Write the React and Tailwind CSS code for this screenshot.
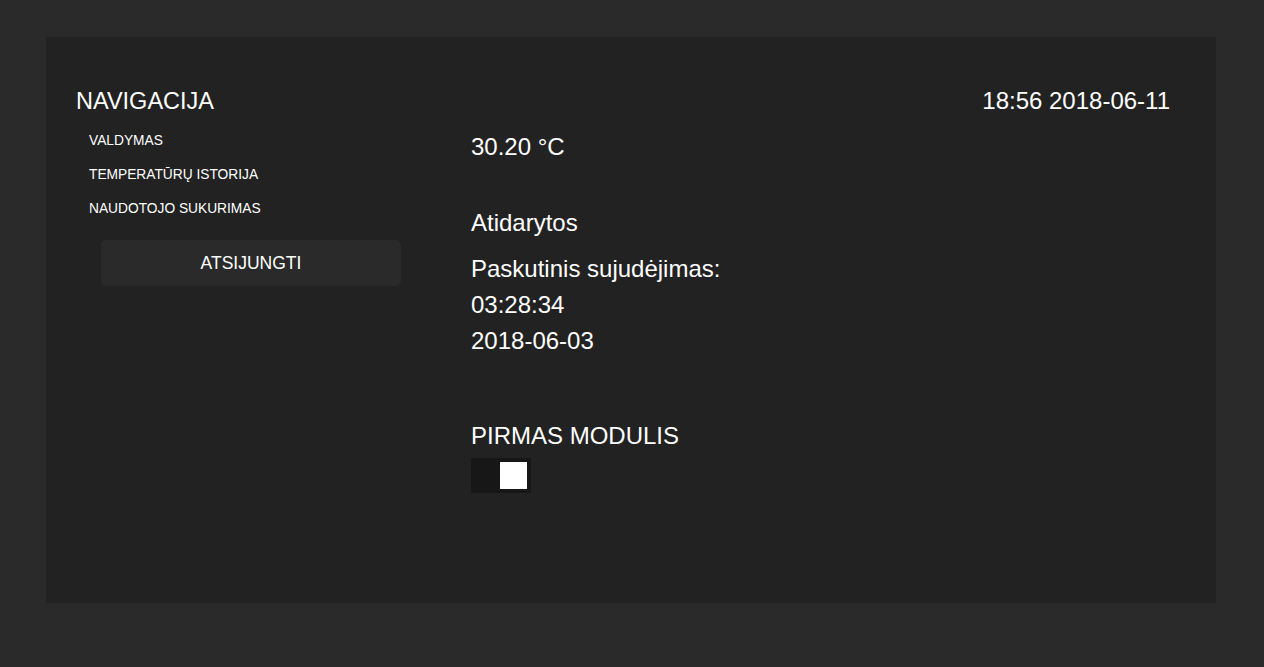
export default function App() {
  const font = { fontFamily: '"Liberation Sans", Arial, sans-serif' };
  return (
    <div className="w-full h-[667px] bg-[#2a2a2a] pt-[37px] pl-[46px] pr-[48px] text-white" style={font}>
      <div className="h-[566px] bg-[#222222] pt-[50px] pl-[30px] pr-[46px] flex">
        <div className="w-[395px] shrink-0 flex flex-col">
          <div className="text-[23.5px] leading-[28px]">NAVIGACIJA</div>
          <div className="mt-[9px] pl-[13px] flex flex-col">
            <a className="text-[13.75px] leading-[34px]">VALDYMAS</a>
            <a className="text-[13.75px] leading-[34px]">TEMPERATŪRŲ ISTORIJA</a>
            <a className="text-[13.75px] leading-[34px]">NAUDOTOJO SUKURIMAS</a>
          </div>
          <div className="mt-[14px] ml-[25px] w-[300px] h-[46px] rounded-[5px] bg-[#2a2a2a] flex items-center justify-center text-[17.5px]">
            ATSIJUNGTI
          </div>
        </div>
        <div className="flex-1 flex flex-col">
          <div className="flex justify-end text-[24px] leading-[28px]">18:56 2018-06-11</div>
          <div className="mt-[18px] text-[24px] leading-[28px]">30.20 °C</div>
          <div className="mt-[48px] text-[24px] leading-[28px]">Atidarytos</div>
          <div className="mt-[14px] flex flex-col text-[24px] leading-[36px]">
            <div>Paskutinis sujudėjimas:</div>
            <div>03:28:34</div>
            <div>2018-06-03</div>
          </div>
          <div className="mt-[63px] text-[24px] leading-[28px]">PIRMAS MODULIS</div>
          <div className="mt-[8px] w-[60px] h-[35px] bg-[#171717] flex items-center justify-end pr-[4px]">
            <div className="w-[27px] h-[27px] bg-white"></div>
          </div>
        </div>
      </div>
    </div>
  );
}
